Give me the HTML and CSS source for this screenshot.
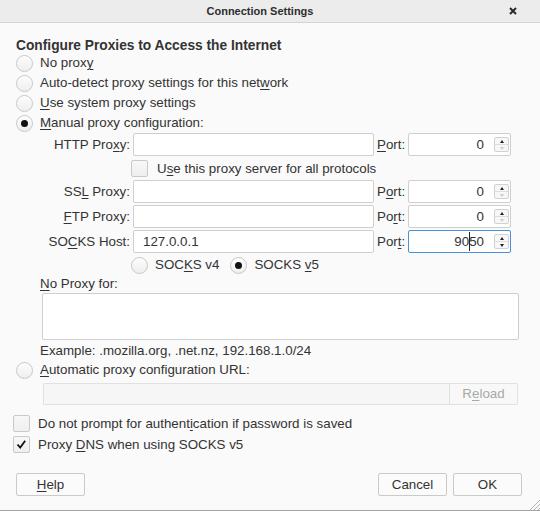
FILE: index.html
```html
<!DOCTYPE html>
<html>
<head>
<meta charset="utf-8">
<title>Connection Settings</title>
<link rel="stylesheet" href="styles.css">
</head>
<body>
<div class="window">
  <header class="titlebar">
    <span></span>
    <span class="title">Connection Settings</span>
    <span class="close"><svg width="8" height="8" viewBox="0 0 8 8"><path d="M1 1L7 7M7 1L1 7" stroke="#2a2a2a" stroke-width="2"/></svg></span>
  </header>
  <main class="content">
    <h1 class="heading">Configure Proxies to Access the Internet</h1>
    <div class="radios">
      <div class="opt"><span class="radio"></span><span>No prox<u>y</u></span></div>
      <div class="opt"><span class="radio"></span><span>Auto-detect proxy settings for this net<u>w</u>ork</span></div>
      <div class="opt"><span class="radio"></span><span><u>U</u>se system proxy settings</span></div>
      <div class="opt"><span class="radio on"></span><span><u>M</u>anual proxy configuration:</span></div>
    </div>

    <div class="manual">
      <span class="lbl">HTTP Pro<u>x</u>y:</span>
      <div class="field"></div>
      <span class="plbl"><u>P</u>ort:</span>
      <div class="port"><span class="val">0</span><span class="spin"><span class="up"></span><span class="down off"></span></span></div>

      <div class="chkrow"><span class="check"></span><span>U<u>s</u>e this proxy server for all protocols</span></div>

      <span class="lbl">SS<u>L</u> Proxy:</span>
      <div class="field"></div>
      <span class="plbl">P<u>o</u>rt:</span>
      <div class="port"><span class="val">0</span><span class="spin"><span class="up"></span><span class="down off"></span></span></div>

      <span class="lbl"><u>F</u>TP Proxy:</span>
      <div class="field"></div>
      <span class="plbl">Po<u>r</u>t:</span>
      <div class="port"><span class="val">0</span><span class="spin"><span class="up"></span><span class="down off"></span></span></div>

      <span class="lbl">SO<u>C</u>KS Host:</span>
      <div class="field">127.0.0.1</div>
      <span class="plbl">Por<u>t</u>:</span>
      <div class="port focus"><span class="val">90<span class="caret"></span>50</span><span class="spin"><span class="up"></span><span class="down"></span></span></div>

      <div class="socksrow">
        <div class="opt"><span class="radio"></span><span>SOC<u>K</u>S v4</span></div>
        <div class="opt"><span class="radio on"></span><span>SOCKS <u>v</u>5</span></div>
      </div>
    </div>

    <div class="noproxy">
      <div class="lbl2"><u>N</u>o Proxy for:</div>
      <div class="textarea"></div>
      <div class="example">Example: .mozilla.org, .net.nz, 192.168.1.0/24</div>
    </div>

    <div class="opt auto"><span class="radio"></span><span><u>A</u>utomatic proxy configuration URL:</span></div>
    <div class="urlrow">
      <div class="url"></div>
      <div class="reload">R<u>e</u>load</div>
    </div>

    <div class="checks">
      <div class="copt"><span class="check"></span><span>Do not prompt for authent<u>i</u>cation if password is saved</span></div>
      <div class="copt"><span class="check"><svg width="15" height="15" viewBox="0 0 15 15"><path d="M3.5 7.5L6.2 10.5L11.2 3.8" fill="none" stroke="#111" stroke-width="1.8"/></svg></span><span>Proxy <u>D</u>NS when using SOCKS v5</span></div>
    </div>

    <div class="buttons">
      <button class="btn"><u>H</u>elp</button>
      <button class="btn push">Cancel</button>
      <button class="btn">OK</button>
    </div>
  </main>
  <svg class="grip" width="12" height="12" viewBox="0 0 12 12"><path d="M12 2L2 12M12 6L6 12M12 10L10 12" stroke="#b5b5b5" stroke-width="1"/></svg>
</div>
</body>
</html>
```

FILE: styles.css
```css
* { box-sizing: border-box; }
html, body { margin: 0; padding: 0; }
body {
  width: 540px;
  height: 511px;
  overflow: hidden;
  background: #fafafa;
  font-family: "Liberation Sans", Arial, sans-serif;
  font-size: 13.33px;
  color: #333;
}
u { text-decoration-thickness: 1px; text-underline-offset: 2px; }

.window {
  position: relative;
  height: 511px;
  border-bottom: 1px solid #a3a3a3;
}

.titlebar {
  height: 23px;
  background: #ececec;
  border-bottom: 1px solid #d4d4d4;
  display: grid;
  grid-template-columns: 1fr auto 1fr;
  align-items: center;
}
.title { font-weight: bold; font-size: 11px; color: #2e2e2e; margin-right: 20px; }
.close { justify-self: end; margin-right: 23px; display: flex; }

.content { padding: 15px 0 0 16px; }

.heading {
  margin: 0;
  font-size: 13.75px;
  font-weight: bold;
  line-height: 16px;
  margin-bottom: -1px;
  color: #333;
}

.opt {
  display: flex;
  align-items: center;
  gap: 7px;
  height: 20px;
  line-height: 16px;
}
.radio {
  width: 17px;
  height: 17px;
  border-radius: 50%;
  border: 1px solid #c8c8c8;
  background: linear-gradient(#fdfdfd, #eeeeee);
  flex: none;
  display: flex;
  align-items: center;
  justify-content: center;
}
.radio.on::after {
  content: "";
  width: 7px;
  height: 7px;
  border-radius: 50%;
  background: #111;
}

.manual {
  display: grid;
  grid-template-columns: 114px 241px 28px 103px;
  grid-template-rows: 23px 20px 23px 23px 23px 20px;
  column-gap: 3px;
  row-gap: 2px;
  align-items: center;
}
.lbl { text-align: right; white-space: nowrap; }
.plbl { white-space: nowrap; }
.field {
  height: 23px;
  background: #fff;
  border: 1px solid #cfcfcf;
  border-radius: 2px;
  padding-left: 9px;
  line-height: 21px;
}
.port {
  height: 23px;
  background: #fff;
  border: 1px solid #cfcfcf;
  border-radius: 2px;
  display: flex;
  align-items: center;
  justify-content: flex-end;
  padding-right: 1px;
}
.port.focus { border-color: #4a90d9; }
.val { margin-right: 10px; line-height: 16px; display: flex; align-items: center; }
.caret {
  display: inline-block;
  width: 1px;
  height: 19px;
  background: #222;
  margin: 0 -0.5px;
}
.spin {
  width: 15px;
  height: 15px;
  border: 1px solid #d2d2d2;
  border-radius: 2px;
  background: #f7f7f7;
  display: flex;
  flex-direction: column;
}
.spin span { flex: 1; display: flex; align-items: center; justify-content: center; }
.spin .up { border-bottom: 1px solid #dedede; }
.spin .up::after {
  content: "";
  border-left: 2.5px solid transparent;
  border-right: 2.5px solid transparent;
  border-bottom: 3px solid #222;
}
.spin .down::after {
  content: "";
  border-left: 2.5px solid transparent;
  border-right: 2.5px solid transparent;
  border-top: 3px solid #222;
}
.spin .down.off::after { border-top-color: #cccccc; }

.chkrow {
  grid-column: 2 / 5;
  display: flex;
  align-items: center;
  gap: 9px;
  margin-left: -2px;
}
.check {
  width: 17px;
  height: 17px;
  border: 1px solid #c9c9c9;
  border-radius: 2px;
  background: linear-gradient(#f7f7f7, #efefef);
  flex: none;
  display: flex;
  align-items: center;
  justify-content: center;
}
.socksrow {
  grid-column: 2 / 5;
  display: flex;
  gap: 11px;
  margin-left: -2px;
}

.noproxy { padding-left: 24px; }
.lbl2 { margin-top: 1px; line-height: 16px; }
.textarea {
  margin: 1px 0 0 2px;
  width: 477px;
  height: 47px;
  background: #fff;
  border: 1px solid #cfcfcf;
  border-radius: 2px;
}
.example { margin-top: 3px; line-height: 16px; }

.opt.auto { margin-top: 1px; }

.urlrow {
  display: flex;
  margin: 3px 0 0 27px;
  height: 22px;
}
.url {
  width: 406px;
  height: 22px;
  background: #f6f6f6;
  border: 1px solid #e1e1e1;
  border-right: none;
  border-radius: 2px 0 0 2px;
}
.reload {
  width: 69px;
  height: 22px;
  border: 1px solid #e1e1e1;
  border-radius: 0 2px 2px 0;
  background: #f8f8f8;
  color: #a8a8a8;
  text-align: center;
  line-height: 20px;
}

.checks { margin: 8px 0 0 -3px; }
.copt {
  display: flex;
  align-items: center;
  gap: 8px;
  height: 21px;
}

.buttons {
  display: flex;
  width: 506px;
  margin-top: 18px;
  gap: 6px;
}
.btn {
  width: 69px;
  height: 23px;
  padding: 0;
  background: #fbfbfb;
  border: 1px solid #cacaca;
  border-radius: 2px;
  font-family: inherit;
  font-size: 13.33px;
  color: #333;
}
.btn.push { margin-left: auto; }

.grip { position: absolute; right: 0; bottom: 0; }
```
